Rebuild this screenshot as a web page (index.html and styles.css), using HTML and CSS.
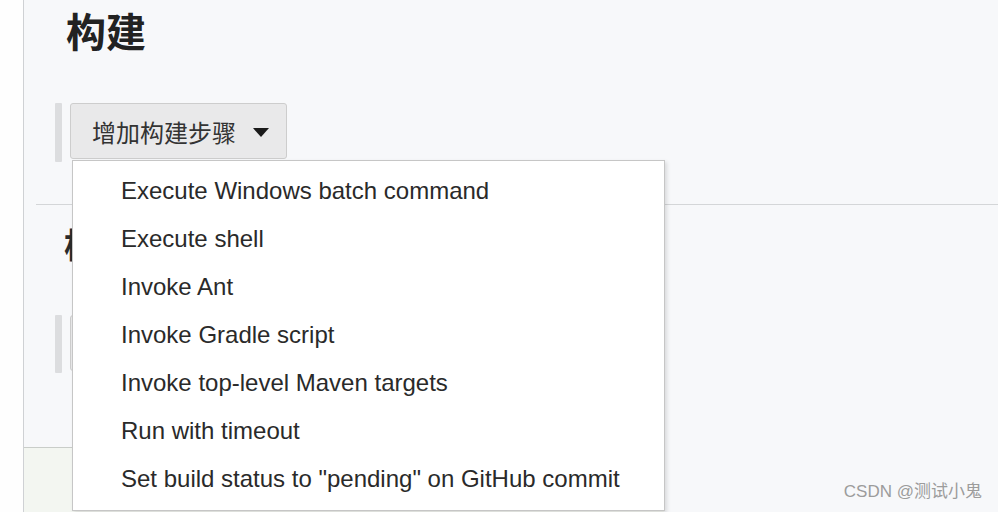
FILE: index.html
```html
<!DOCTYPE html>
<html lang="zh-CN">
<head>
<meta charset="utf-8">
<title>构建</title>
<link rel="stylesheet" href="styles.css">
</head>
<body>
<div class="page">
  <div class="side"></div>
  <div class="main">
    <h1 class="title">构建</h1>
    <div class="builder">
      <div class="handle"></div>
      <button class="add-btn">增加构建步骤<span class="caret"></span></button>
    </div>
    <div class="rule"></div>
    <h2 class="subtitle">构</h2>
    <div class="builder second">
      <div class="handle"></div>
      <div class="add-btn empty"></div>
    </div>
    <div class="footer-panel"></div>

    <ul class="menu">
      <li>Execute Windows batch command</li>
      <li>Execute shell</li>
      <li>Invoke Ant</li>
      <li>Invoke Gradle script</li>
      <li>Invoke top-level Maven targets</li>
      <li>Run with timeout</li>
      <li>Set build status to "pending" on GitHub commit</li>
    </ul>
  </div>
  <div class="watermark">CSDN @测试小鬼</div>
</div>
</body>
</html>
```

FILE: styles.css
```css
html, body {
  margin: 0;
  padding: 0;
  height: 100%;
  overflow: hidden;
}
body {
  font-family: "Liberation Sans", Arial, "Noto Sans CJK SC", sans-serif;
  background: #f7f8fa;
}
.page {
  display: flex;
  height: 512px;
  position: relative;
  overflow: hidden;
}
.side {
  width: 23px;
  background: #fefefe;
  border-right: 1px solid #cfd1d4;
  flex: none;
}
.main {
  flex: 1;
  position: relative;
  background: #f7f8fa;
  display: flex;
  flex-direction: column;
}
.title {
  margin: 0;
  padding: 6px 0 0 42px;
  font-family: "Noto Sans CJK SC", sans-serif;
  font-size: 40px;
  line-height: 48px;
  font-weight: 700;
  color: #222;
}
.builder {
  display: flex;
  gap: 8px;
  margin-top: 49px;
  padding-left: 31px;
  align-items: flex-start;
}
.handle {
  width: 7px;
  height: 59px;
  background: #dcdddf;
  border-radius: 1px;
}
.add-btn {
  width: 217px;
  height: 56px;
  box-sizing: border-box;
  border: 1px solid #cdcdcd;
  border-radius: 3px;
  background: #e9e9ea;
  display: flex;
  align-items: center;
  padding: 0 0 0 21px;
  font-family: "Noto Sans CJK SC", sans-serif;
  font-size: 24px;
  color: #333;
  white-space: nowrap;
}
.caret {
  display: inline-block;
  width: 0;
  height: 0;
  margin-left: 17px;
  margin-top: 2px;
  border-left: 8px solid transparent;
  border-right: 8px solid transparent;
  border-top: 9px solid #1a1a1a;
}
.rule {
  height: 1px;
  background: #d4d6d8;
  margin: 42px 0 0 12px;
}
.subtitle {
  margin: 19px 0 0 0;
  padding-left: 40px;
  font-family: "Noto Sans CJK SC", sans-serif;
  font-size: 34px;
  line-height: 40px;
  font-weight: 700;
  color: #2a2a2a;
}
.builder.second {
  margin-top: 51px;
}
.builder.second .handle {
  height: 58px;
}
.footer-panel {
  margin-top: 74px;
  width: 640px;
  flex: 1;
  border-top: 1px solid #c9cdc9;
  background: #f3f6f1;
}
.menu {
  position: absolute;
  left: 48px;
  top: 160px;
  width: 593px;
  height: 351px;
  box-sizing: border-box;
  margin: 0;
  padding: 6px 0 0 0;
  list-style: none;
  background: #fff;
  border: 1px solid #c6c6c6;
  box-shadow: 2px 2px 4px rgba(0, 0, 0, 0.12);
  overflow: hidden;
}
.menu li {
  height: 48px;
  line-height: 48px;
  padding-left: 48px;
  font-size: 24px;
  color: #2a2a2a;
  white-space: nowrap;
}
.watermark {
  position: absolute;
  right: 16px;
  top: 480px;
  font-family: "Liberation Sans", Arial, "Noto Sans CJK SC", sans-serif;
  font-size: 17px;
  line-height: 24px;
  color: #9c9c9c;
}
```
